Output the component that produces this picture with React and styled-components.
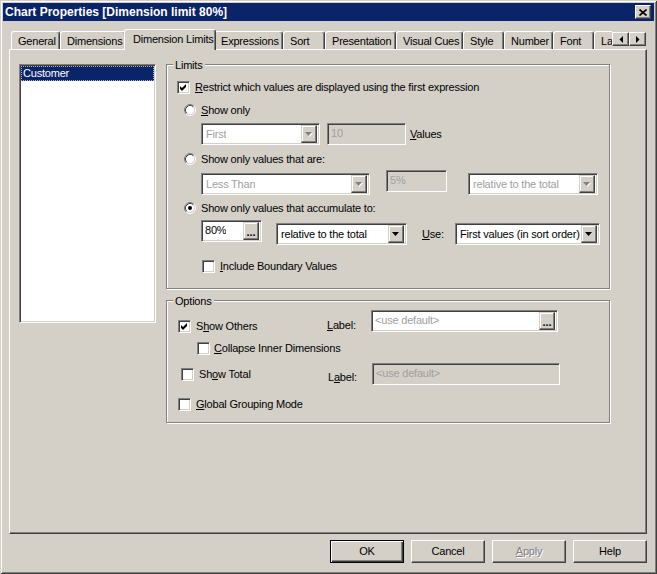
import React from "react";
import styled, { createGlobalStyle, css } from "styled-components";

const FACE = "#d4d0c8";
const NAVY = "#0a246a";

const GlobalStyle = createGlobalStyle`
  html, body {
    margin: 0;
    padding: 0;
    background: ${FACE};
  }
  body {
    font-family: "Liberation Sans", Arial, sans-serif;
    font-size: 11px;
    line-height: 13px;
    letter-spacing: -0.2px;
    color: #000;
  }
  * {
    box-sizing: border-box;
  }
`;

const sunken = css`
  border: 1px solid;
  border-color: #808080 #fff #fff #808080;
  box-shadow: inset 1px 1px 0 #404040, inset -1px -1px 0 ${FACE};
`;

const raised = css`
  border: 1px solid;
  border-color: #fff #404040 #404040 #fff;
  box-shadow: inset -1px -1px 0 #808080, inset 1px 1px 0 ${FACE};
  background: ${FACE};
`;

const Window = styled.div`
  width: 657px;
  height: 574px;
  padding: 3px;
  background: ${FACE};
  display: flex;
  flex-direction: column;
  box-shadow: inset 1px 1px 0 ${FACE}, inset -1px -1px 0 #404040,
    inset 2px 2px 0 #fff, inset -2px -2px 0 #808080;
`;

const TitleBar = styled.div`
  height: 18px;
  background: ${NAVY};
  display: flex;
  align-items: center;
  justify-content: space-between;
  padding: 0 3px 0 2px;
`;

const Title = styled.span`
  color: #fff;
  font-weight: bold;
  font-size: 12px;
  letter-spacing: 0;
`;

const CaptionButton = styled.div`
  ${raised};
  width: 16px;
  height: 14px;
  display: flex;
  align-items: center;
  justify-content: center;
`;

const Body = styled.div`
  display: flex;
  flex-direction: column;
  padding: 0 7px 0 6px;
`;

const TabRow = styled.div`
  height: 28px;
  display: flex;
  align-items: flex-end;
  position: relative;
  z-index: 1;
`;

const TabList = styled.div`
  flex: 1;
  height: 29px;
  margin-bottom: -1px;
  display: flex;
  align-items: flex-end;
  overflow: hidden;
  padding-left: 2px;
`;

const Tab = styled.div`
  flex-shrink: 0;
  position: relative;
  width: ${(p) => (p.$active ? p.$w + 4 : p.$w)}px;
  height: ${(p) => (p.$active ? 21 : 18)}px;
  margin: 0 ${(p) => (p.$active ? -2 : 0)}px ${(p) => (p.$active ? 0 : 1)}px;
  padding: 3px 0 0 ${(p) => (p.$active ? 8 : 6)}px;
  z-index: ${(p) => (p.$active ? 2 : 1)};
  background: ${FACE};
  border-top: 1px solid #fff;
  border-left: 1px solid #fff;
  border-right: 1px solid #404040;
  box-shadow: inset -1px 0 0 #808080;
  border-radius: 3px 3px 0 0;
  white-space: nowrap;
  overflow: hidden;
`;

const TabArrows = styled.div`
  display: flex;
  margin: 0 1px 3px 0;
`;

const ArrowButton = styled.div`
  ${raised};
  width: 17px;
  height: 14px;
  display: flex;
  align-items: center;
  justify-content: center;
`;

const Panel = styled.div`
  height: 485px;
  background: ${FACE};
  border-top: 1px solid #fff;
  border-left: 1px solid #fff;
  border-right: 1px solid #404040;
  border-bottom: 1px solid #404040;
  box-shadow: inset -1px -1px 0 #808080;
  padding: 14px 0 0 9px;
  display: flex;
  align-items: flex-start;
  gap: 10px;
`;

const ListBox = styled.div`
  ${sunken};
  width: 137px;
  height: 259px;
  background: #fff;
  padding: 1px;
`;

const ListItem = styled.div`
  height: 15px;
  padding: 0 0 0 1px;
  line-height: 13px;
  background: ${(p) => (p.$selected ? NAVY : "transparent")};
  color: ${(p) => (p.$selected ? "#fff" : "#000")};
  border: 1px dotted ${(p) => (p.$selected ? "#b8b4a8" : "transparent")};
`;

const RightColumn = styled.div`
  width: 444px;
  display: flex;
  flex-direction: column;
  gap: 11px;
`;

const Group = styled.div`
  position: relative;
  height: ${(p) => p.$h}px;
  border: 1px solid #808080;
  box-shadow: inset 1px 1px 0 #fff, 1px 1px 0 #fff;
  display: flex;
  flex-direction: column;
`;

const GroupCaption = styled.span`
  position: absolute;
  top: -6px;
  left: 6px;
  padding: 0 2px;
  background: ${FACE};
  line-height: 13px;
`;

const Row = styled.div`
  display: flex;
  align-items: ${(p) => (p.$top ? "flex-start" : "center")};
  height: ${(p) => p.$h || 20}px;
  margin-top: ${(p) => p.$mt || 0}px;
  padding-left: ${(p) => p.$indent || 0}px;
`;

const Cell = styled.div`
  display: flex;
  align-items: center;
  flex-shrink: 0;
  width: ${(p) => (p.$w ? `${p.$w}px` : "auto")};
  margin-top: ${(p) => p.$mt || 0}px;
  margin-left: ${(p) => p.$ml || 0}px;
`;

const Text = styled.span`
  margin-left: ${(p) => p.$ml || 0}px;
  white-space: nowrap;
  color: ${(p) => (p.$disabled ? "#808080" : "#000")};
`;

const Box = styled.span`
  ${sunken};
  width: 13px;
  height: 13px;
  background: #fff;
  flex-shrink: 0;
  display: flex;
  align-items: center;
  justify-content: center;
`;

const Field = styled.div`
  ${sunken};
  width: ${(p) => p.$w}px;
  height: 22px;
  background: ${(p) => (p.$disabled ? FACE : "#fff")};
  color: ${(p) => (p.$muted ? "#a0a0a0" : "#000")};
  display: flex;
  align-items: ${(p) => (p.$combo ? "center" : "flex-start")};
  justify-content: space-between;
  padding: ${(p) => (p.$combo ? "2px 2px 2px 4px" : "2px 2px 2px 3px")};
  flex-shrink: 0;
  margin-top: ${(p) => p.$mt || 0}px;
  margin-left: ${(p) => p.$ml || 0}px;
  white-space: nowrap;
`;

const FieldText = styled.span`
  padding-top: ${(p) => (p.$combo ? 0 : 1)}px;
  overflow: hidden;
`;

const FieldButton = styled.div`
  border: 1px solid;
  border-color: ${FACE} #404040 #404040 ${FACE};
  box-shadow: inset -1px -1px 0 #808080, inset 1px 1px 0 #fff;
  background: ${FACE};
  width: 16px;
  height: 18px;
  flex-shrink: 0;
  align-self: stretch;
  display: flex;
  align-items: ${(p) => (p.$dots ? "flex-end" : "center")};
  justify-content: center;
  font-weight: bold;
  color: #000;
  line-height: 10px;
  letter-spacing: 0;
  padding-bottom: ${(p) => (p.$dots ? 2 : 0)}px;
  margin: -1px 0 -1px 0;
`;

const ButtonRow = styled.div`
  display: flex;
  justify-content: flex-end;
  gap: 7px;
  margin-top: 6px;
`;

const PushButton = styled.div`
  width: 74px;
  height: 23px;
  display: flex;
  align-items: center;
  justify-content: center;
  ${(p) =>
    p.$default
      ? css`
          border: 1px solid #000;
          box-shadow: inset 1px 1px 0 #fff, inset -1px -1px 0 #404040,
            inset -2px -2px 0 #808080;
          background: ${FACE};
        `
      : raised};
  color: ${(p) => (p.$disabled ? "#808080" : "#000")};
  text-shadow: ${(p) => (p.$disabled ? "1px 1px 0 #fff" : "none")};
`;

const CloseGlyph = () => (
  <svg width="8" height="7" viewBox="0 0 8 7">
    <path d="M0.5 0.5 L7.5 6.5 M7.5 0.5 L0.5 6.5" stroke="#000" strokeWidth="1.6" />
  </svg>
);

const Triangle = ({ dir = "down", disabled }) => {
  if (dir === "left")
    return (
      <svg width="4" height="7" viewBox="0 0 4 7">
        <path d="M4 0 L4 7 L0.5 3.5 Z" fill="#000" />
      </svg>
    );
  if (dir === "right")
    return (
      <svg width="4" height="7" viewBox="0 0 4 7">
        <path d="M0 0 L0 7 L3.5 3.5 Z" fill="#000" />
      </svg>
    );
  return (
    <svg width="8" height="5" viewBox="0 0 8 5">
      {disabled && <path d="M1 1 H8 L4.5 5 Z" fill="#fff" />}
      <path d="M0 0 H7 L3.5 4 Z" fill={disabled ? "#808080" : "#000"} />
    </svg>
  );
};

const CheckBox = ({ checked }) => (
  <Box>
    {checked && (
      <svg width="7" height="7" viewBox="0 0 7 7">
        <path d="M0 2 L2 4 L6 0 L6 3 L2 7 L0 5 Z" fill="#000" />
      </svg>
    )}
  </Box>
);

const Radio = ({ checked }) => (
  <svg width="12" height="12" viewBox="0 0 12 12" style={{ flexShrink: 0 }}>
    <circle cx="6" cy="6" r="4.5" fill="#fff" />
    <path d="M2.11 9.89 A5.5 5.5 0 0 1 9.89 2.11" stroke="#808080" fill="none" />
    <path d="M9.89 2.11 A5.5 5.5 0 0 1 2.11 9.89" stroke="#fff" fill="none" />
    <path d="M2.82 9.18 A4.5 4.5 0 0 1 9.18 2.82" stroke="#404040" fill="none" />
    <path d="M9.18 2.82 A4.5 4.5 0 0 1 2.82 9.18" stroke={FACE} fill="none" />
    {checked && <circle cx="6" cy="6" r="2" fill="#000" />}
  </svg>
);

const Combo = ({ w, value, disabled, mt, ml }) => (
  <Field $w={w} $combo $muted={disabled} $mt={mt} $ml={ml}>
    <FieldText $combo>{value}</FieldText>
    <FieldButton>
      <Triangle disabled={disabled} />
    </FieldButton>
  </Field>
);

const TextBox = ({ w, value, disabled, muted, dots, mt, ml }) => (
  <Field $w={w} $disabled={disabled} $muted={disabled || muted} $mt={mt} $ml={ml}>
    <FieldText>{value}</FieldText>
    {dots && <FieldButton $dots>...</FieldButton>}
  </Field>
);

const tabs = [
  { label: "General", w: 49 },
  { label: "Dimensions", w: 66 },
  { label: "Dimension Limits", w: 88, active: true },
  { label: "Expressions", w: 69 },
  { label: "Sort", w: 42 },
  { label: "Presentation", w: 71 },
  { label: "Visual Cues", w: 67 },
  { label: "Style", w: 41 },
  { label: "Number", w: 49 },
  { label: "Font", w: 41 },
  { label: "Layout", w: 60 },
];

export default function App() {
  return (
    <>
      <GlobalStyle />
      <Window>
        <TitleBar>
          <Title>Chart Properties [Dimension limit 80%]</Title>
          <CaptionButton>
            <CloseGlyph />
          </CaptionButton>
        </TitleBar>
        <Body>
          <TabRow>
            <TabList>
              {tabs.map((t) => (
                <Tab key={t.label} $w={t.w} $active={t.active}>
                  {t.label}
                </Tab>
              ))}
            </TabList>
            <TabArrows>
              <ArrowButton>
                <Triangle dir="left" />
              </ArrowButton>
              <ArrowButton>
                <Triangle dir="right" />
              </ArrowButton>
            </TabArrows>
          </TabRow>
          <Panel>
            <ListBox>
              <ListItem $selected>Customer</ListItem>
            </ListBox>
            <RightColumn>
              <Group $h={225}>
                <GroupCaption>Limits</GroupCaption>
                <Row $mt={12} $indent={10}>
                  <CheckBox checked />
                  <Text $ml={5}>
                    <u>R</u>estrict which values are displayed using the first expression
                  </Text>
                </Row>
                <Row $mt={3} $indent={17}>
                  <Radio />
                  <Text $ml={5}>
                    <u>S</u>how only
                  </Text>
                </Row>
                <Row $mt={3} $h={22} $indent={34}>
                  <Combo w={119} value="First" disabled />
                  <TextBox w={79} value="10" disabled ml={7} />
                  <Text $ml={4}>
                    <u>V</u>alues
                  </Text>
                </Row>
                <Row $mt={4} $indent={17}>
                  <Radio />
                  <Text $ml={5}>Show only values that are:</Text>
                </Row>
                <Row $mt={1} $h={26} $top $indent={34}>
                  <Combo w={169} value="Less Than" disabled mt={3} />
                  <TextBox w={61} value="5%" disabled ml={16} />
                  <Combo w={130} value="relative to the total" disabled mt={3} ml={21} />
                </Row>
                <Row $mt={2} $indent={17}>
                  <Radio checked />
                  <Text $ml={5}>Show only values that accumulate to:</Text>
                </Row>
                <Row $mt={2} $h={27} $top $indent={34}>
                  <TextBox w={61} value="80%" dots />
                  <Combo w={131} value="relative to the total" mt={3} ml={14} />
                  <Cell $w={33} $mt={8} $ml={15}>
                    <Text>
                      <u>U</u>se:
                    </Text>
                  </Cell>
                  <Combo w={145} value="First values (in sort order)" mt={3} />
                </Row>
                <Row $mt={9} $indent={35}>
                  <CheckBox />
                  <Text $ml={5}>
                    <u>I</u>nclude Boundary Values
                  </Text>
                </Row>
              </Group>

              <Group $h={123}>
                <GroupCaption>Options</GroupCaption>
                <Row $mt={9} $h={23} $top $indent={11}>
                  <Cell $w={149} $mt={10}>
                    <CheckBox checked />
                    <Text $ml={5}>
                      S<u>h</u>ow Others
                    </Text>
                  </Cell>
                  <Cell $w={44} $mt={9}>
                    <Text>
                      <u>L</u>abel:
                    </Text>
                  </Cell>
                  <TextBox w={187} value="<use default>" muted dots />
                </Row>
                <Row $mt={5} $indent={30}>
                  <CheckBox />
                  <Text $ml={4}>
                    <u>C</u>ollapse Inner Dimensions
                  </Text>
                </Row>
                <Row $mt={5} $h={22} $top $indent={14}>
                  <Cell $w={147} $mt={5}>
                    <CheckBox />
                    <Text $ml={5}>
                      Sh<u>o</u>w Total
                    </Text>
                  </Cell>
                  <Cell $w={44} $mt={8}>
                    <Text>
                      L<u>a</u>bel:
                    </Text>
                  </Cell>
                  <TextBox w={188} value="<use default>" disabled />
                </Row>
                <Row $mt={9} $indent={11}>
                  <CheckBox />
                  <Text $ml={5}>
                    <u>G</u>lobal Grouping Mode
                  </Text>
                </Row>
              </Group>
            </RightColumn>
          </Panel>
          <ButtonRow>
            <PushButton $default>OK</PushButton>
            <PushButton>Cancel</PushButton>
            <PushButton $disabled>
              <span>
                <u>A</u>pply
              </span>
            </PushButton>
            <PushButton>Help</PushButton>
          </ButtonRow>
        </Body>
      </Window>
    </>
  );
}
